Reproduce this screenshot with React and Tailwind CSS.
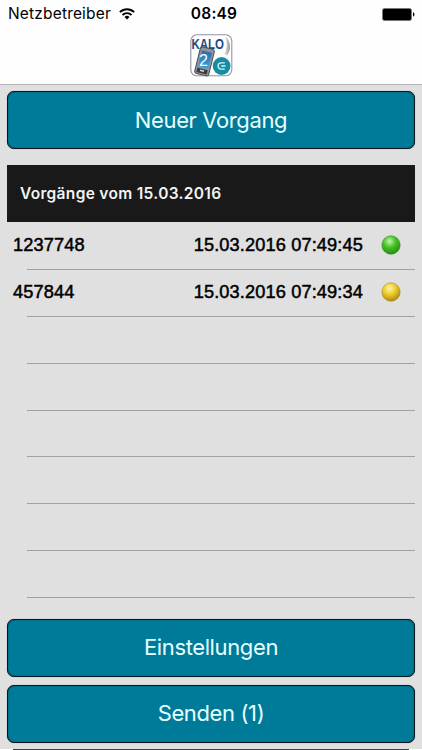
/**
 * Vorgangsliste - Startseite
 */

const vorgaenge = [
  { id: '1237748', datum: '15.03.2016 07:49:45', status: 'green' },
  { id: '457844', datum: '15.03.2016 07:49:34', status: 'yellow' },
];

const LEERE_ZEILEN = 6;

const farben = {
  green: { hell: '#c4f5b0', mitte: '#43c022', dunkel: '#2b8a16' },
  yellow: { hell: '#fff6a8', mitte: '#edcb28', dunkel: '#a88616' },
};

function WifiIcon() {
  return (
    <svg width="16" height="12" viewBox="0 0 16 12" fill="none" stroke="#000" strokeWidth="1.9">
      <path d="M0.9 4.2a10 10 0 0 1 14.2 0" />
      <path d="M3.5 7a6.4 6.4 0 0 1 9 0" />
      <path d="M8 11.6 5.5 9a3.6 3.6 0 0 1 5 0z" fill="#000" stroke="none" />
    </svg>
  );
}

function BatteryIcon() {
  return (
    <svg width="33" height="13" viewBox="0 0 33 13">
      <rect x="0.5" y="0.5" width="29" height="12" rx="2" fill="#000" stroke="#777" />
      <path d="M31 4.3c1.9.5 1.9 3.9 0 4.4z" fill="#000" />
    </svg>
  );
}

function KaloLogo() {
  return (
    <svg width="43" height="43" viewBox="0 0 43 43" fontFamily="Liberation Sans, sans-serif">
      <defs>
        <linearGradient id="bogen" x1="0" y1="0" x2="1" y2="0">
          <stop offset="0" stopColor="#e4e4e4" />
          <stop offset="1" stopColor="#999" />
        </linearGradient>
        <linearGradient id="display" x1="0" y1="0" x2="0" y2="1">
          <stop offset="0" stopColor="#2f6fa8" />
          <stop offset="1" stopColor="#3aa0df" />
        </linearGradient>
      </defs>
      <rect x="0.8" y="0.8" width="41" height="41" rx="6" fill="#fff" stroke="#8d95a5" strokeWidth="1.1" />
      <text x="1.5" y="15.2" fontSize="14" fontWeight="700" fill="#204b83" textLength="32.5" lengthAdjust="spacingAndGlyphs">KALO</text>
      <path d="M35.5 2.5c5.5 5 6 13 1.5 19l-2.7-1.5c3-5 3.3-11 1.2-17.5z" fill="url(#bogen)" />
      <g transform="rotate(14 14 27)">
        <rect x="7.4" y="13.6" width="14.4" height="27.4" rx="2.5" fill="#92969b" stroke="#4c4e53" strokeWidth="1" />
        <rect x="9.4" y="17" width="10.4" height="16.5" fill="url(#display)" />
        <path d="M9.2 35h10.6v4.5H9.2z" fill="#3b3d42" />
        <path d="M12.5 37h4" stroke="#ddd" strokeWidth="1.5" />
      </g>
      <text x="9" y="32" fontSize="16" fill="#f4faff">2</text>
      <circle cx="31.6" cy="32" r="8.9" fill="#178ca3" />
      <path d="M34.8 28.9h-3.6a3.1 3.1 0 0 0 0 6.2h3.6M31.2 32h4.4" fill="none" stroke="#d5f1f4" strokeWidth="1.4" />
    </svg>
  );
}

function StatusLed({ status }) {
  const f = farben[status];
  return (
    <svg className="-mt-px" width="20" height="20" viewBox="0 0 20 20">
      <defs>
        <radialGradient id={`led-${status}`} cx="0.42" cy="0.3" r="0.72">
          <stop offset="0" stopColor={f.hell} />
          <stop offset="0.48" stopColor={f.mitte} />
          <stop offset="1" stopColor={f.dunkel} />
        </radialGradient>
      </defs>
      <circle cx="10" cy="10" r="9.2" fill={`url(#led-${status})`} stroke={f.dunkel} strokeOpacity="0.6" strokeWidth="0.9" />
    </svg>
  );
}

function Button({ children }) {
  return (
    <button className="block h-[58px] w-full shrink-0 rounded-[7px] border border-[#07171d] bg-[#007a99] text-[22px] tracking-[-0.38px] text-[#e6ffff] shadow-[0_0_1px_#777,inset_0_0_1px_#07171d]">
      {children}
    </button>
  );
}

export default function App() {
  return (
    <div className="flex h-[750px] w-[422px] flex-col overflow-hidden bg-[#e0e0e0] font-['Inter',sans-serif] text-black">
      <header className="flex h-[85px] shrink-0 flex-col items-center border-b border-[#b5b3b5] bg-[#fefefe]">
        {/* Statusleiste */}
        <div className="grid h-7 w-full grid-cols-3 items-center pl-2 pr-[7px] text-[15.5px]">
          <div className="flex items-center gap-2">
            <span className="tracking-[0.17px]">Netzbetreiber</span>
            <WifiIcon />
          </div>
          <span className="pl-[5px] text-center font-semibold tracking-[0.2px]">08:49</span>
          <div className="flex justify-end">
            <BatteryIcon />
          </div>
        </div>
        <div className="mt-[6px]">
          <KaloLogo />
        </div>
      </header>

      <main className="flex flex-col px-[7px] pt-[6px]">
        <Button>Neuer Vorgang</Button>

        <h2 className="mt-4 flex h-[57px] items-center bg-[#191919] px-[13px] text-[15.5px] font-semibold tracking-[0.32px] text-[#f3f3f3]">
          Vorgänge vom 15.03.2016
        </h2>

        <ul className="h-[376px] pt-px font-['Liberation_Sans',sans-serif] text-[18.2px] tracking-[0.13px] [-webkit-text-stroke:0.5px_black]">
          {vorgaenge.map((v) => (
            <li key={v.id} className="flex h-[46.88px] flex-col">
              <div className="flex flex-1 items-center pl-[6px] pr-[14px]">
                <span className="flex-1">{v.id}</span>
                <span className="mr-[18px]">{v.datum}</span>
                <StatusLed status={v.status} />
              </div>
              <div className="ml-5 h-px bg-[#a2a2a2]" />
            </li>
          ))}
          {Array.from({ length: LEERE_ZEILEN }, (_, i) => (
            <li key={i} className="flex h-[46.88px] flex-col justify-end">
              <div className="ml-5 h-px bg-[#a2a2a2]" />
            </li>
          ))}
        </ul>

        <div className="mt-[20.6px] flex flex-col gap-2">
          <Button>Einstellungen</Button>
          <Button>Senden (1)</Button>
        </div>
      </main>

      <footer className="mt-auto h-px shrink-0 bg-white px-[13px]">
        <div className="h-px bg-[#3c3c4c]" />
      </footer>
    </div>
  );
}
